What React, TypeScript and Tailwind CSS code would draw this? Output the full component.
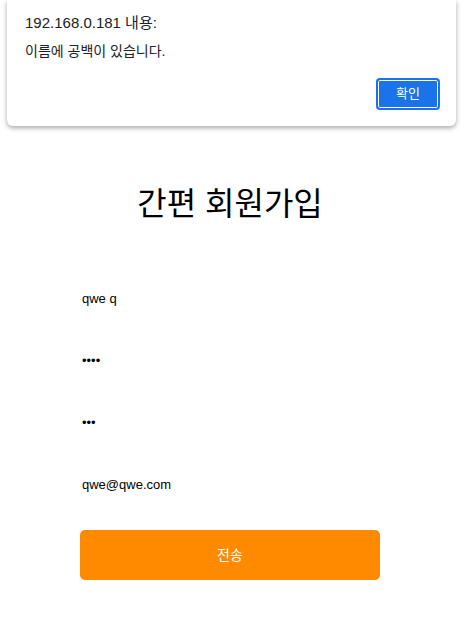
const fieldClass =
	'block h-[40px] w-full bg-transparent px-[2px] text-[13px] text-black outline-none';

const fields = [
	{ type: 'text', value: 'qwe q', name: 'name' },
	{ type: 'password', value: 'qwer', name: 'password' },
	{ type: 'password', value: 'qwe', name: 'passwordCheck' },
	{ type: 'email', value: 'qwe@qwe.com', name: 'email' },
];

// browser alert() box, sits over the page
const AlertDialog = () => (
	<div className="absolute left-[7px] top-0 z-10 flex h-[126px] w-[449px] flex-col rounded-b-[6px] bg-white pl-[18px] pr-[16px] pt-[13px] text-[#202124] shadow-[0_2px_5px_rgba(0,0,0,0.35)]">
		<p className="text-[15px] leading-[20px]">192.168.0.181 내용:</p>
		<p className="mt-[9px] text-[14px] leading-[18px]">이름에 공백이 있습니다.</p>
		<div className="mt-[18px] flex justify-end">
			<button
				type="button"
				className="h-[32px] w-[64px] rounded-[4px] border-2 border-[#1a73e8] bg-[#1a73e8] text-[13px] text-white shadow-[inset_0_0_0_1px_white]"
			>
				확인
			</button>
		</div>
	</div>
);

export default function App() {
	return (
		<div
			className="relative min-h-[623px] bg-white"
			style={{ fontFamily: '"Liberation Sans", "Noto Sans CJK KR", sans-serif' }}
		>
			<AlertDialog />
			<div className="w-[460px] pt-[180px]">
				<h1 className="text-center text-[32px] leading-[48px] text-black">
					간편 회원가입
				</h1>
				<form className="mx-auto mt-[50px] flex w-[300px] flex-col gap-[22px]">
					{fields.map((f) => (
						<input
							key={f.name}
							type={f.type}
							name={f.name}
							defaultValue={f.value}
							readOnly
							className={fieldClass}
						/>
					))}
					<button
						type="button"
						className="mt-[4px] h-[50px] w-full rounded-[5px] bg-[#ff8a00] text-[14px] text-white"
					>
						전송
					</button>
				</form>
			</div>
		</div>
	);
}
